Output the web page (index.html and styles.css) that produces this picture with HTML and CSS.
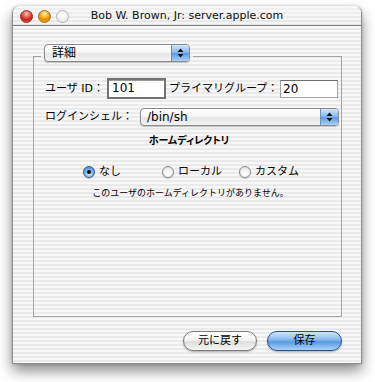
FILE: index.html
```html
<!DOCTYPE html>
<html lang="ja">
<head>
<meta charset="utf-8">
<title>Bob W. Brown, Jr: server.apple.com</title>
<link rel="stylesheet" href="styles.css">
</head>
<body>
<div class="window">
  <div class="titlebar">
    <div class="lights">
      <span class="light red"></span>
      <span class="light yellow"></span>
      <span class="light gray"></span>
    </div>
    <div class="title">Bob W. Brown, Jr: server.apple.com</div>
    <div></div>
  </div>
  <div class="content">
    <fieldset class="group">
      <legend class="tab">
        <div class="popup popup-tab">
          <span class="popup-label">詳細</span>
          <span class="popup-arrows"><svg width="7" height="10" viewBox="0 0 7 10"><path d="M3.5 0.5 L6.5 4 L0.5 4 Z M3.5 9.5 L6.5 6 L0.5 6 Z" fill="#111"/></svg></span>
        </div>
      </legend>
      <div class="form">
        <div class="row">
          <span class="label">ユーザ ID：</span>
          <div class="field focused">101</div>
          <span class="label label2">プライマリグループ：</span>
          <div class="field plain">20</div>
        </div>
        <div class="row row2">
          <span class="label">ログインシェル：</span>
          <div class="popup popup-shell">
            <span class="popup-label">/bin/sh</span>
            <span class="popup-arrows"><svg width="7" height="10" viewBox="0 0 7 10"><path d="M3.5 0.5 L6.5 4 L0.5 4 Z M3.5 9.5 L6.5 6 L0.5 6 Z" fill="#111"/></svg></span>
          </div>
        </div>
      </div>
      <div class="heading">ホームディレクトリ</div>
      <div class="radios">
        <div class="radio"><span class="dot on"></span><span>なし</span></div>
        <div class="radio"><span class="dot"></span><span>ローカル</span></div>
        <div class="radio"><span class="dot"></span><span>カスタム</span></div>
      </div>
      <div class="note">このユーザのホームディレクトリがありません。</div>
    </fieldset>
    <div class="buttons">
      <button class="btn revert">元に戻す</button>
      <button class="btn save">保存</button>
    </div>
  </div>
</div>
</body>
</html>
```

FILE: styles.css
```css
html, body {
  margin: 0;
  padding: 0;
  background: #ffffff;
}
body {
  font-family: "DejaVu Sans", "Noto Sans CJK JP", sans-serif;
  color: #000;
  width: 375px;
  height: 382px;
  overflow: hidden;
}
.window {
  margin: 6px 0 0 12px;
  width: 350px;
  height: 358px;
  box-sizing: border-box;
  border: 1px solid #8f8f8f;
  border-top: none;
  border-radius: 7px 7px 0 0;
  background: repeating-linear-gradient(to bottom, #f8f8f8 0 2px, #eaeaea 2px 4px);
  box-shadow: 0 7px 14px rgba(0, 0, 0, 0.45), 0 0 3px rgba(0, 0, 0, 0.2);
  display: flex;
  flex-direction: column;
}
.titlebar {
  height: 18px;
  border-bottom: 1px solid #7c7c7c;
  border-radius: 7px 7px 0 0;
  background:
    linear-gradient(to bottom, rgba(255,255,255,0.55), rgba(255,255,255,0.1)),
    repeating-linear-gradient(to bottom, #f3f3f3 0 2px, #e2e2e2 2px 4px);
  display: grid;
  grid-template-columns: 1fr auto 1fr;
  align-items: center;
  padding-top: 1px;
  box-sizing: content-box;
}
.lights {
  display: flex;
  gap: 5px;
  padding-left: 7px;
}
.light {
  width: 13px;
  height: 13px;
  border-radius: 50%;
  box-sizing: border-box;
}
.light.red {
  border: 1px solid #9a2a22;
  background: radial-gradient(circle at 50% 25%, #ffd2c8 0, #f06a5e 30%, #c8261c 62%, #e25a48 100%);
}
.light.yellow {
  border: 1px solid #a86a10;
  background: radial-gradient(circle at 50% 25%, #fff0c0 0, #f8c040 30%, #e08a00 62%, #f4b840 100%);
}
.light.gray {
  border: 1px solid #b4b4b4;
  background: radial-gradient(circle at 50% 30%, #ffffff 0, #f2f2f2 50%, #dcdcdc 100%);
}
.title {
  font-size: 11px;
  line-height: 14px;
  color: #111;
  white-space: nowrap;
}
.content {
  flex: 1;
  display: flex;
  flex-direction: column;
}
.group {
  flex: 1;
  margin: 18px 19px 14px 20px;
  padding: 0;
  border: 1px solid #a2a2a2;
  min-width: 0;
}
.tab {
  margin-left: 7px;
  padding: 0 3px 7px;
}
.popup {
  height: 18px;
  box-sizing: border-box;
  border: 1px solid #8a8a8a;
  border-radius: 4px;
  display: flex;
  overflow: hidden;
  background: linear-gradient(to bottom, #ffffff 0, #f7f7f7 45%, #e6e6e6 55%, #f2f2f2 100%);
  box-shadow: 0 1px 1px rgba(0, 0, 0, 0.22);
}
.popup-tab {
  width: 146px;
}
.popup-label {
  flex: 1;
  font-size: 12px;
  line-height: 16px;
  padding-left: 7px;
  white-space: nowrap;
}
.popup-shell .popup-label {
  padding-left: 6px;
}
.popup-arrows {
  width: 17px;
  border-left: 1px solid #6d8fbf;
  background: linear-gradient(to bottom, #d2e6fb 0, #8ab9ee 45%, #5e9ae0 55%, #a9d2f8 100%);
  display: flex;
  align-items: center;
  justify-content: center;
}
.form {
  padding: 9px 2px 0 11px;
}
.row {
  display: flex;
  align-items: center;
  height: 21px;
}
.row2 {
  margin-top: 9px;
  height: 18px;
}
.label {
  font-size: 11px;
  line-height: 14px;
  white-space: nowrap;
}
.label2 {
  margin-left: 3px;
}
.field {
  box-sizing: border-box;
  background: #fff;
  font-size: 12px;
  white-space: nowrap;
}
.field.focused {
  width: 59px;
  height: 21px;
  margin-left: 3px;
  border: 2px solid #737373;
  box-shadow: inset 0 1px 0 #9a9a9a;
  padding-left: 3px;
  line-height: 17px;
}
.field.plain {
  width: 58px;
  height: 18px;
  margin-left: auto;
  margin-right: 1px;
  border: 1px solid #a4a4a4;
  border-top-color: #6c6c6c;
  padding-left: 2px;
  line-height: 16px;
}
.popup-shell {
  width: 199px;
  margin-left: auto;
}
.heading {
  margin-top: 8px;
  text-align: center;
  font-size: 10px;
  font-weight: bold;
  line-height: 14px;
  padding-left: 3px;
  font-feature-settings: "palt";
}
.radios {
  margin-top: 16px;
  padding-left: 49px;
  display: grid;
  grid-template-columns: 79px 77px auto;
  height: 16px;
  align-items: center;
}
.radio {
  display: flex;
  align-items: center;
  gap: 4px;
  font-size: 11px;
  line-height: 14px;
  white-space: nowrap;
}
.dot {
  width: 12px;
  height: 12px;
  box-sizing: border-box;
  border-radius: 50%;
  border: 1px solid #8a8a8a;
  background: radial-gradient(circle at 50% 70%, #ffffff 0, #f4f4f4 45%, #d6d6d6 100%);
  box-shadow: 0 1px 1px rgba(0, 0, 0, 0.18);
  display: flex;
  align-items: center;
  justify-content: center;
}
.dot.on {
  border-color: #34588f;
  background: radial-gradient(circle at 50% 75%, #cfe6fd 0, #7fb4ee 45%, #3f82d6 100%);
}
.dot.on::after {
  content: "";
  width: 4px;
  height: 4px;
  border-radius: 50%;
  background: #111;
}
.note {
  margin-top: 7px;
  text-align: center;
  font-size: 9px;
  line-height: 12px;
  padding-left: 6px;
}
.buttons {
  display: flex;
  justify-content: flex-end;
  gap: 10px;
  padding: 0 19px 12px 0;
}
.btn {
  height: 20px;
  box-sizing: border-box;
  border-radius: 10px;
  font-family: "DejaVu Sans", "Noto Sans CJK JP", sans-serif;
  font-size: 11px;
  line-height: 16px;
  padding: 0;
  color: #000;
  box-shadow: 0 1px 2px rgba(0, 0, 0, 0.3);
}
.btn.revert {
  width: 74px;
  border: 1px solid #7a7a7a;
  background: linear-gradient(to bottom, #ffffff 0, #f4f4f4 45%, #dddddd 55%, #f6f6f6 100%);
}
.btn.save {
  width: 75px;
  border: 1px solid #2f4f86;
  background: linear-gradient(to bottom, #cfe5fc 0, #8fbdf0 40%, #5c9ae2 55%, #a8d4fa 100%);
}
```
